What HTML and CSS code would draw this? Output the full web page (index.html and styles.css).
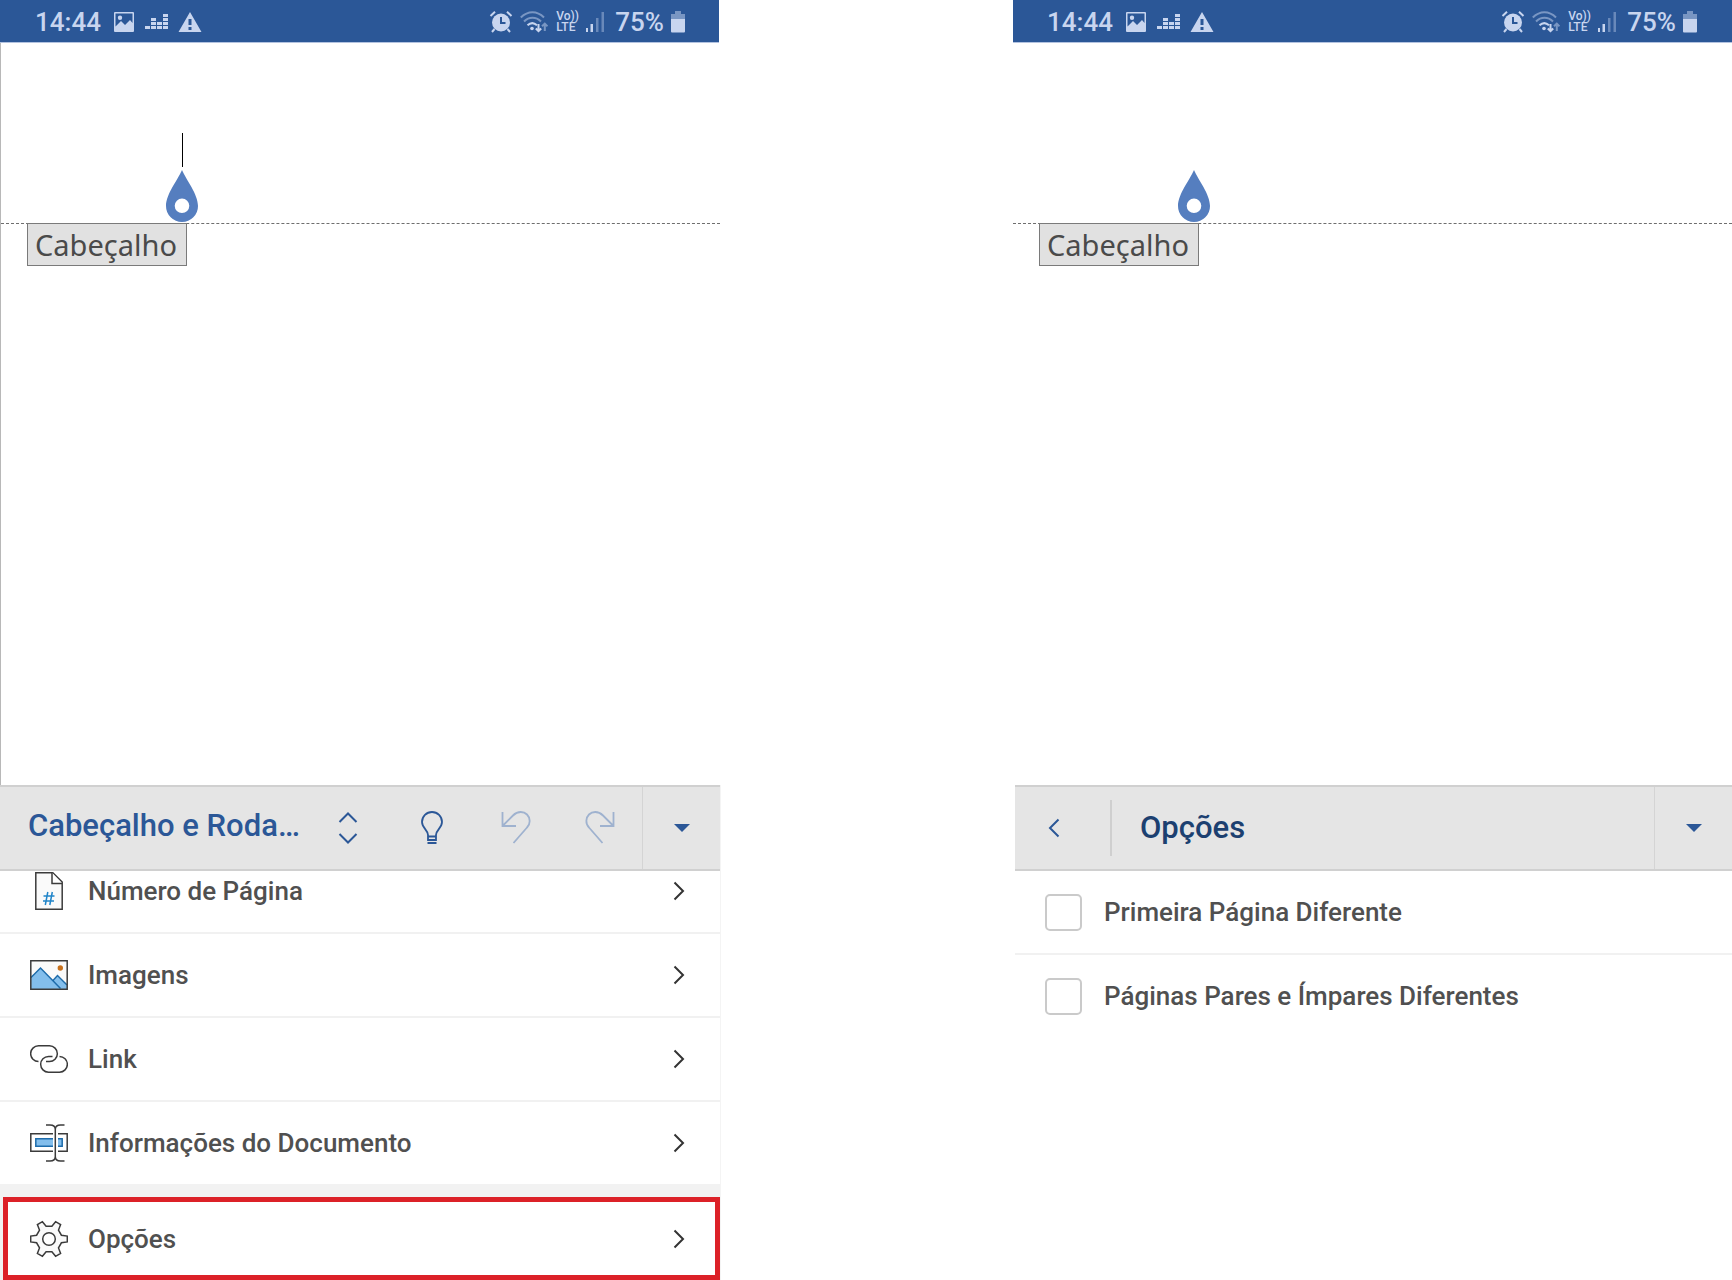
FILE: index.html
```html
<!DOCTYPE html>
<html lang="pt">
<head>
<meta charset="utf-8">
<meta name="viewport" content="width=device-width, initial-scale=1">
<title>Cabeçalho e Rodapé</title>
<link rel="stylesheet" href="styles.css">
</head>
<body>
<svg class="sprite" aria-hidden="true">
  <symbol id="picture" viewBox="0 0 22 22">
    <path fill="currentColor" fill-rule="evenodd" d="M2 1h18a1 1 0 0 1 1 1v18a1 1 0 0 1-1 1H2a1 1 0 0 1-1-1V2a1 1 0 0 1 1-1zM2.500 2.500v13L8 10l4 4 5-5 2.500 3V2.500zM7 4.500a2.200 2.200 0 1 1 0 4.400 2.200 2.200 0 0 1 0-4.400z"/>
  </symbol>
  <symbol id="bars" viewBox="0 0 24 18">
    <path fill="currentColor" d="M0 13h5v3H0zM6 13h5v3H6zM12 13h5v3h-5zM18 13h5v3h-5zM6 9h5v3H6zM12 9h5v3h-5zM18 9h5v3h-5zM6 5h5v3H6zM18 5h5v3h-5zM18 1h5v3h-5z"/>
  </symbol>
  <symbol id="warning" viewBox="0 0 24 22">
    <path fill="currentColor" fill-rule="evenodd" d="M12 1 23.500 21H.5zM10.500 8v6h3V8zM10.500 16v3h3v-3z"/>
  </symbol>
  <symbol id="alarm" viewBox="0 0 24 24">
    <circle cx="12" cy="12.500" r="9" fill="currentColor"/>
    <path d="M1.500 6 6 1.800M22.500 6 18 1.800M5.500 19 3 22M18.500 19l2.500 3" stroke="currentColor" stroke-width="2" fill="none"/>
    <path class="alarm-hands" d="M12 7v6h4.500" stroke-width="2" fill="none"/>
  </symbol>
  <symbol id="wifi" viewBox="0 0 28 24">
    <g fill="none" stroke="currentColor" stroke-width="2">
      <path opacity=".5" d="M.8 7.500C8 .5 17 .5 24 7.500"/>
      <path opacity=".5" d="M4 11.500c5-5 12-5 17 0"/>
      <path d="M7.500 15.300c3-2.800 6.500-2.800 9.500 0"/>
      <path d="M18.500 14v7M15.800 18.500l2.700 2.700 2.700-2.700"/>
      <path opacity=".5" d="M24.800 21v-7M22 16.300l2.800-2.700 2.700 2.700"/>
    </g>
    <circle cx="12" cy="18.500" r="1.800" fill="currentColor"/>
  </symbol>
  <symbol id="signal" viewBox="0 0 20 22">
    <path fill="currentColor" d="M1 17h2v4H1zM5.500 13h2.500v8H5.500z"/>
    <path fill="currentColor" opacity=".4" d="M11 7h2.500v14H11zM16.500 1H19v20h-2.500z"/>
  </symbol>
  <symbol id="battery" viewBox="0 0 14 22">
    <path fill="currentColor" opacity=".5" d="M4 0h6v3h4v5H0V3h4z"/>
    <path fill="currentColor" d="M0 8h14v12.500a1 1 0 0 1-1 1H1a1 1 0 0 1-1-1z"/>
  </symbol>
  <symbol id="drop" viewBox="0 0 32 52">
    <path fill="#557ebf" fill-rule="evenodd" d="M16 0C20 9.500 32 24 32 36a16 16 0 0 1-32 0C0 24 12 9.500 16 0zM16 28.500a7.300 7.300 0 1 0 0 14.600 7.300 7.300 0 0 0 0-14.600z"/>
  </symbol>
  <symbol id="chevron" viewBox="0 0 12 20">
    <path d="M1.500 1.500 10 10l-8.500 8.500" fill="none" stroke="currentColor" stroke-width="2"/>
  </symbol>
  <symbol id="triangle" viewBox="0 0 16 8">
    <path d="M0 0h16L8 8z" fill="currentColor"/>
  </symbol>
</svg>

<main class="screens">
  <section class="phone phone-menu" aria-label="Menu Cabeçalho e Rodapé">
    <header class="status">
      <span class="clock">14:44</span>
      <svg class="s-picture"><use href="#picture"/></svg>
      <svg class="s-bars"><use href="#bars"/></svg>
      <svg class="s-warning"><use href="#warning"/></svg>
      <span class="spacer"></span>
      <svg class="s-alarm"><use href="#alarm"/></svg>
      <svg class="s-wifi"><use href="#wifi"/></svg>
      <span class="volte"><span>Vo))</span><span>LTE</span></span>
      <svg class="s-signal"><use href="#signal"/></svg>
      <span class="charge">75%</span>
      <svg class="s-battery"><use href="#battery"/></svg>
    </header>

    <div class="document document-edge">
      <div class="page-header">
        <span class="text-cursor"></span>
        <svg class="handle"><use href="#drop"/></svg>
      </div>
      <span class="header-tag">Cabeçalho</span>
    </div>

    <div class="toolbar">
      <h2 class="tab-name">Cabeçalho e Roda…</h2>
      <button class="tool" type="button" aria-label="Mudar separador">
        <svg width="20" height="32" viewBox="0 0 20 32" fill="none" stroke="currentColor" stroke-width="2"><path d="M1.500 10 10 1.500l8.500 8.500M1.500 22l8.500 8.500 8.500-8.500"/></svg>
      </button>
      <button class="tool" type="button" aria-label="Diga-me">
        <svg width="22" height="34" viewBox="0 0 22 34" fill="none" stroke="currentColor" stroke-width="1.800"><path d="M7 24c0-5-6-7-6-13a10 10 0 0 1 20 0c0 6-6 8-6 13v5H7zM7 25.500h8M6.500 32h9"/></svg>
      </button>
      <button class="tool tool-off" type="button" aria-label="Anular">
        <svg width="30" height="34" viewBox="0 0 30 34" fill="none" stroke="currentColor" stroke-width="1.800"><path d="M1.500 1v14H15M1.500 15 12 4.500c5-5 11-4 14-1s4 9 0 13L12.500 32"/></svg>
      </button>
      <button class="tool tool-off" type="button" aria-label="Refazer">
        <svg width="30" height="34" viewBox="0 0 30 34" fill="none" stroke="currentColor" stroke-width="1.800"><path d="M28.500 1v14H15M28.500 15 18 4.500c-5-5-11-4-14-1s-4 9 0 13L17.500 32"/></svg>
      </button>
      <button class="tool tool-collapse" type="button" aria-label="Fechar painel">
        <svg class="triangle"><use href="#triangle"/></svg>
      </button>
    </div>

    <div class="panel">
      <ul class="commands">
        <li><button class="command" type="button">
          <svg class="icon" viewBox="0 0 38 38"><path d="M5.800.8h17L32.200 10v27.200H5.800z" fill="#fafafa" stroke="#3b3b3b" stroke-width="1.500"/><path d="M22 .8v10.700h10" fill="#fff" stroke="#3b3b3b" stroke-width="1.500"/><path d="M17.800 20l-2.500 13M22.300 20l-2.500 13M13.500 24h11M13 29h11" fill="none" stroke="#2185c9" stroke-width="1.500"/></svg>
          <span>Número de Página</span>
          <svg class="chevron"><use href="#chevron"/></svg>
        </button></li>
        <li><button class="command" type="button">
          <svg class="icon" viewBox="0 0 38 38"><path d="M.8 4.800h36.400v28.400H.8z" fill="#fafafa"/><path d="M1 21.500 10.500 12 23 24.500l4.500-4.500L37 29.500V33H1z" fill="#83beec"/><path d="M1 21.500 10.500 12l20 20.500M23 24.500l4.500-5L37 29" fill="none" stroke="#1e6cab" stroke-width="1.500"/><circle cx="30.300" cy="12" r="2.700" fill="#c8711c"/><path d="M.8 4.800h36.400v28.400H.8z" fill="none" stroke="#3b3b3b" stroke-width="1.500"/></svg>
          <span>Imagens</span>
          <svg class="chevron"><use href="#chevron"/></svg>
        </button></li>
        <li><button class="command" type="button">
          <svg class="icon" viewBox="0 0 38 38"><g transform="translate(0 5)" fill="none" stroke="#3b3b3b" stroke-width="1.500"><path d="M8.500 16.500a7.850 7.850 0 0 1 0-15.700h11a7.850 7.850 0 0 1 0 15.700H16"/><path d="M22.500 11.500h-4a7.850 7.850 0 0 0 0 15.700h11a7.850 7.850 0 0 0 0-15.700"/></g></svg>
          <span>Link</span>
          <svg class="chevron"><use href="#chevron"/></svg>
        </button></li>
        <li><button class="command" type="button">
          <svg class="icon" viewBox="0 0 38 38"><path d="M23 9.800H.8v17.400H23M28 9.800h9.200v17.400H28" fill="none" stroke="#3b3b3b" stroke-width="1.500"/><path d="M23 14.800H5.800v7.400H23zM28 14.800h4.200v7.400H28z" fill="#83beec"/><path d="M23 14.800H5.800v7.400H23M28 14.800h4.200v7.400H28" fill="none" stroke="#1e6cab" stroke-width="1.500"/><path d="M16 1h4c3.500 0 5.300 1.500 5.300 4.500v27c0 3-1.800 4.500-5.300 4.500h-4M34.500 1h-4c-3.500 0-5.200 1.500-5.200 4.500v27c0 3 1.700 4.500 5.200 4.500h4" fill="none" stroke="#3b3b3b" stroke-width="1.500"/></svg>
          <span>Informações do Documento</span>
          <svg class="chevron"><use href="#chevron"/></svg>
        </button></li>
      </ul>
      <div class="command-group">
        <button class="command command-marked" type="button">
          <svg class="icon" viewBox="-19 -19 38 38"><path d="M18.300-2.900V2.900L12.400 3.800 9.500 8.900 11.600 14.400 6.600 17.300 2.900 12.700H-2.900L-6.600 17.300-11.600 14.400-9.500 8.900-12.400 3.800-18.300 2.900V-2.900L-12.400-3.800-9.500-8.900-11.600-14.400-6.600-17.300-2.900-12.700H2.900L6.600-17.300 11.600-14.400 9.500-8.900 12.400-3.800z" fill="#fafafa" stroke="#3b3b3b" stroke-width="1.500"/><circle r="6.300" fill="#fff" stroke="#3b3b3b" stroke-width="1.500"/></svg>
          <span>Opções</span>
          <svg class="chevron"><use href="#chevron"/></svg>
        </button>
      </div>
    </div>
  </section>

  <section class="phone phone-options" aria-label="Opções">
    <header class="status">
      <span class="clock">14:44</span>
      <svg class="s-picture"><use href="#picture"/></svg>
      <svg class="s-bars"><use href="#bars"/></svg>
      <svg class="s-warning"><use href="#warning"/></svg>
      <span class="spacer"></span>
      <svg class="s-alarm"><use href="#alarm"/></svg>
      <svg class="s-wifi"><use href="#wifi"/></svg>
      <span class="volte"><span>Vo))</span><span>LTE</span></span>
      <svg class="s-signal"><use href="#signal"/></svg>
      <span class="charge">75%</span>
      <svg class="s-battery"><use href="#battery"/></svg>
    </header>

    <div class="document">
      <div class="page-header">
        <svg class="handle"><use href="#drop"/></svg>
      </div>
      <span class="header-tag">Cabeçalho</span>
    </div>

    <div class="toolbar">
      <button class="back" type="button" aria-label="Voltar">
        <svg width="12" height="20" viewBox="0 0 12 20" fill="none" stroke="currentColor" stroke-width="2"><path d="M10.500 1.500 2 10l8.500 8.500"/></svg>
      </button>
      <h2 class="panel-name">Opções</h2>
      <button class="tool tool-collapse" type="button" aria-label="Fechar painel">
        <svg class="triangle"><use href="#triangle"/></svg>
      </button>
    </div>

    <div class="panel">
      <label class="option"><input type="checkbox"><span>Primeira Página Diferente</span></label>
      <label class="option"><input type="checkbox"><span>Páginas Pares e Ímpares Diferentes</span></label>
    </div>
  </section>
</main>
</body>
</html>
```
FILE: styles.css
```css
* {
  box-sizing: border-box;
}

body {
  margin: 0;
  background: #fff;
  color: #505050;
  font-family: Roboto, "Liberation Sans", sans-serif;
}

button {
  margin: 0;
  padding: 0;
  border: 0;
  background: none;
  color: inherit;
  font: inherit;
  cursor: pointer;
}

svg {
  display: block;
  flex: none;
}

.sprite {
  position: absolute;
  width: 0;
  height: 0;
}

.screens {
  display: grid;
  grid-template-columns: 720fr 719fr;
  column-gap: 293px;
  min-height: 100vh;
}

.phone {
  display: flex;
  flex-direction: column;
  min-width: 0;
}

/* Android status bar */
.status {
  display: flex;
  align-items: center;
  height: 43px;
  padding: 1px 35px 0 34px;
  border-bottom: 1px solid #b3c3e0;
  background: #2b5797;
  color: #c8d5ef;
}

.phone-menu .status {
  margin-right: 1px;
  padding: 1px 34px 0 35px;
}

.clock,
.charge {
  font-size: 26px;
  font-weight: 500;
  line-height: 30px;
}

.spacer {
  flex: 1;
}

.s-picture { width: 22px; height: 22px; margin-left: 12px; }
.s-bars { width: 24px; height: 18px; margin-left: 10px; }
.s-warning { width: 24px; height: 22px; margin-left: 9px; }
.s-alarm { width: 24px; height: 24px; }
.s-wifi { width: 28px; height: 24px; margin-left: 7px; }
.s-signal { width: 20px; height: 22px; margin-left: 7px; }
.s-battery { width: 14px; height: 22px; margin-left: 7px; }

.alarm-hands {
  stroke: #2b5797;
}

.volte {
  display: flex;
  flex-direction: column;
  width: 22px;
  margin-left: 8px;
  font-size: 12px;
  font-weight: 500;
  line-height: 11px;
  white-space: nowrap;
}

.charge {
  margin-left: 10px;
}

/* Document canvas */
.document {
  flex: 1;
}

.document-edge {
  border-left: 1px solid #b8b8b8;
}

.page-header {
  display: flex;
  flex-direction: column;
  align-items: flex-start;
  justify-content: flex-end;
  gap: 3px;
  height: 181px;
  padding: 0 0 1px 165px;
  border-bottom: 1px dashed #6e6e6e;
}

.text-cursor {
  width: 1px;
  height: 34px;
  margin-left: 16px;
  background: #000;
}

.handle {
  width: 32px;
  height: 52px;
}

.header-tag {
  display: block;
  width: 160px;
  height: 43px;
  margin: -1px 0 0 26px;
  padding-left: 7px;
  border: 1px solid #7a7a7a;
  background: #e1e1e1;
  color: #4a4a4a;
  font-family: "Noto Sans", "Open Sans", sans-serif;
  font-size: 29px;
  line-height: 42px;
}

/* Ribbon bar */
.toolbar {
  display: flex;
  align-items: center;
  height: 86px;
  border: solid #d0d0d0;
  border-width: 2px 0;
  background: #e5e5e5;
  color: #2b5797;
}

.tab-name,
.panel-name {
  flex: 1;
  min-width: 0;
  margin: 0;
  padding-left: 28px;
  font-size: 31px;
  font-weight: 500;
  line-height: 40px;
  white-space: nowrap;
}

.tab-name {
  padding-bottom: 5px;
}

.panel-name {
  color: #1c4070;
}

.tool {
  display: flex;
  flex: none;
  align-items: center;
  justify-content: center;
  width: 84px;
  height: 82px;
}

.tool-off {
  color: #9fb2cf;
}

.tool-collapse {
  width: 78px;
  border-left: 1px solid #d4d4d4;
}

.triangle {
  width: 16px;
  height: 8px;
}

.back {
  display: flex;
  align-items: center;
  width: 97px;
  height: 56px;
  padding-left: 33px;
  border-right: 2px solid #cfcfcf;
}

/* Panel under the ribbon bar */
.panel {
  min-height: 409px;
  overflow: hidden;
}

.phone-menu .toolbar,
.phone-menu .panel {
  box-shadow: 1px 0 0 #f4f4f4;
}

.phone-options .toolbar,
.phone-options .panel {
  margin-left: 2px;
}

.commands {
  margin: -21px 0 0;
  padding: 0;
  list-style: none;
}

.commands li + li {
  border-top: 2px solid #f1f1f1;
}

.command {
  display: flex;
  align-items: center;
  width: 100%;
  height: 82px;
  padding: 0 35px 0 30px;
  font-size: 26px;
  font-weight: 500;
  line-height: 32px;
  text-align: left;
}

.command span {
  flex: 1;
  margin-left: 20px;
}

.icon {
  width: 38px;
  height: 38px;
}

.chevron {
  width: 12px;
  height: 20px;
  color: #333;
}

.command-group {
  padding: 13px 0 0 3px;
  background: #f2f2f2;
}

.command-marked {
  height: 83px;
  padding: 0 30px 0 22px;
  border: 5px solid #dc2128;
  background: #fff;
}

.option {
  display: flex;
  align-items: center;
  height: 84px;
  padding-left: 30px;
  border-bottom: 2px solid #f1f1f1;
  font-size: 26px;
  font-weight: 500;
  line-height: 32px;
}

.option:last-child {
  border-color: transparent;
}

.option input {
  appearance: none;
  flex: none;
  width: 37px;
  height: 37px;
  margin: 0 22px 0 0;
  border: 2px solid #cacaca;
  border-radius: 5px;
  background: #fff;
}
```
